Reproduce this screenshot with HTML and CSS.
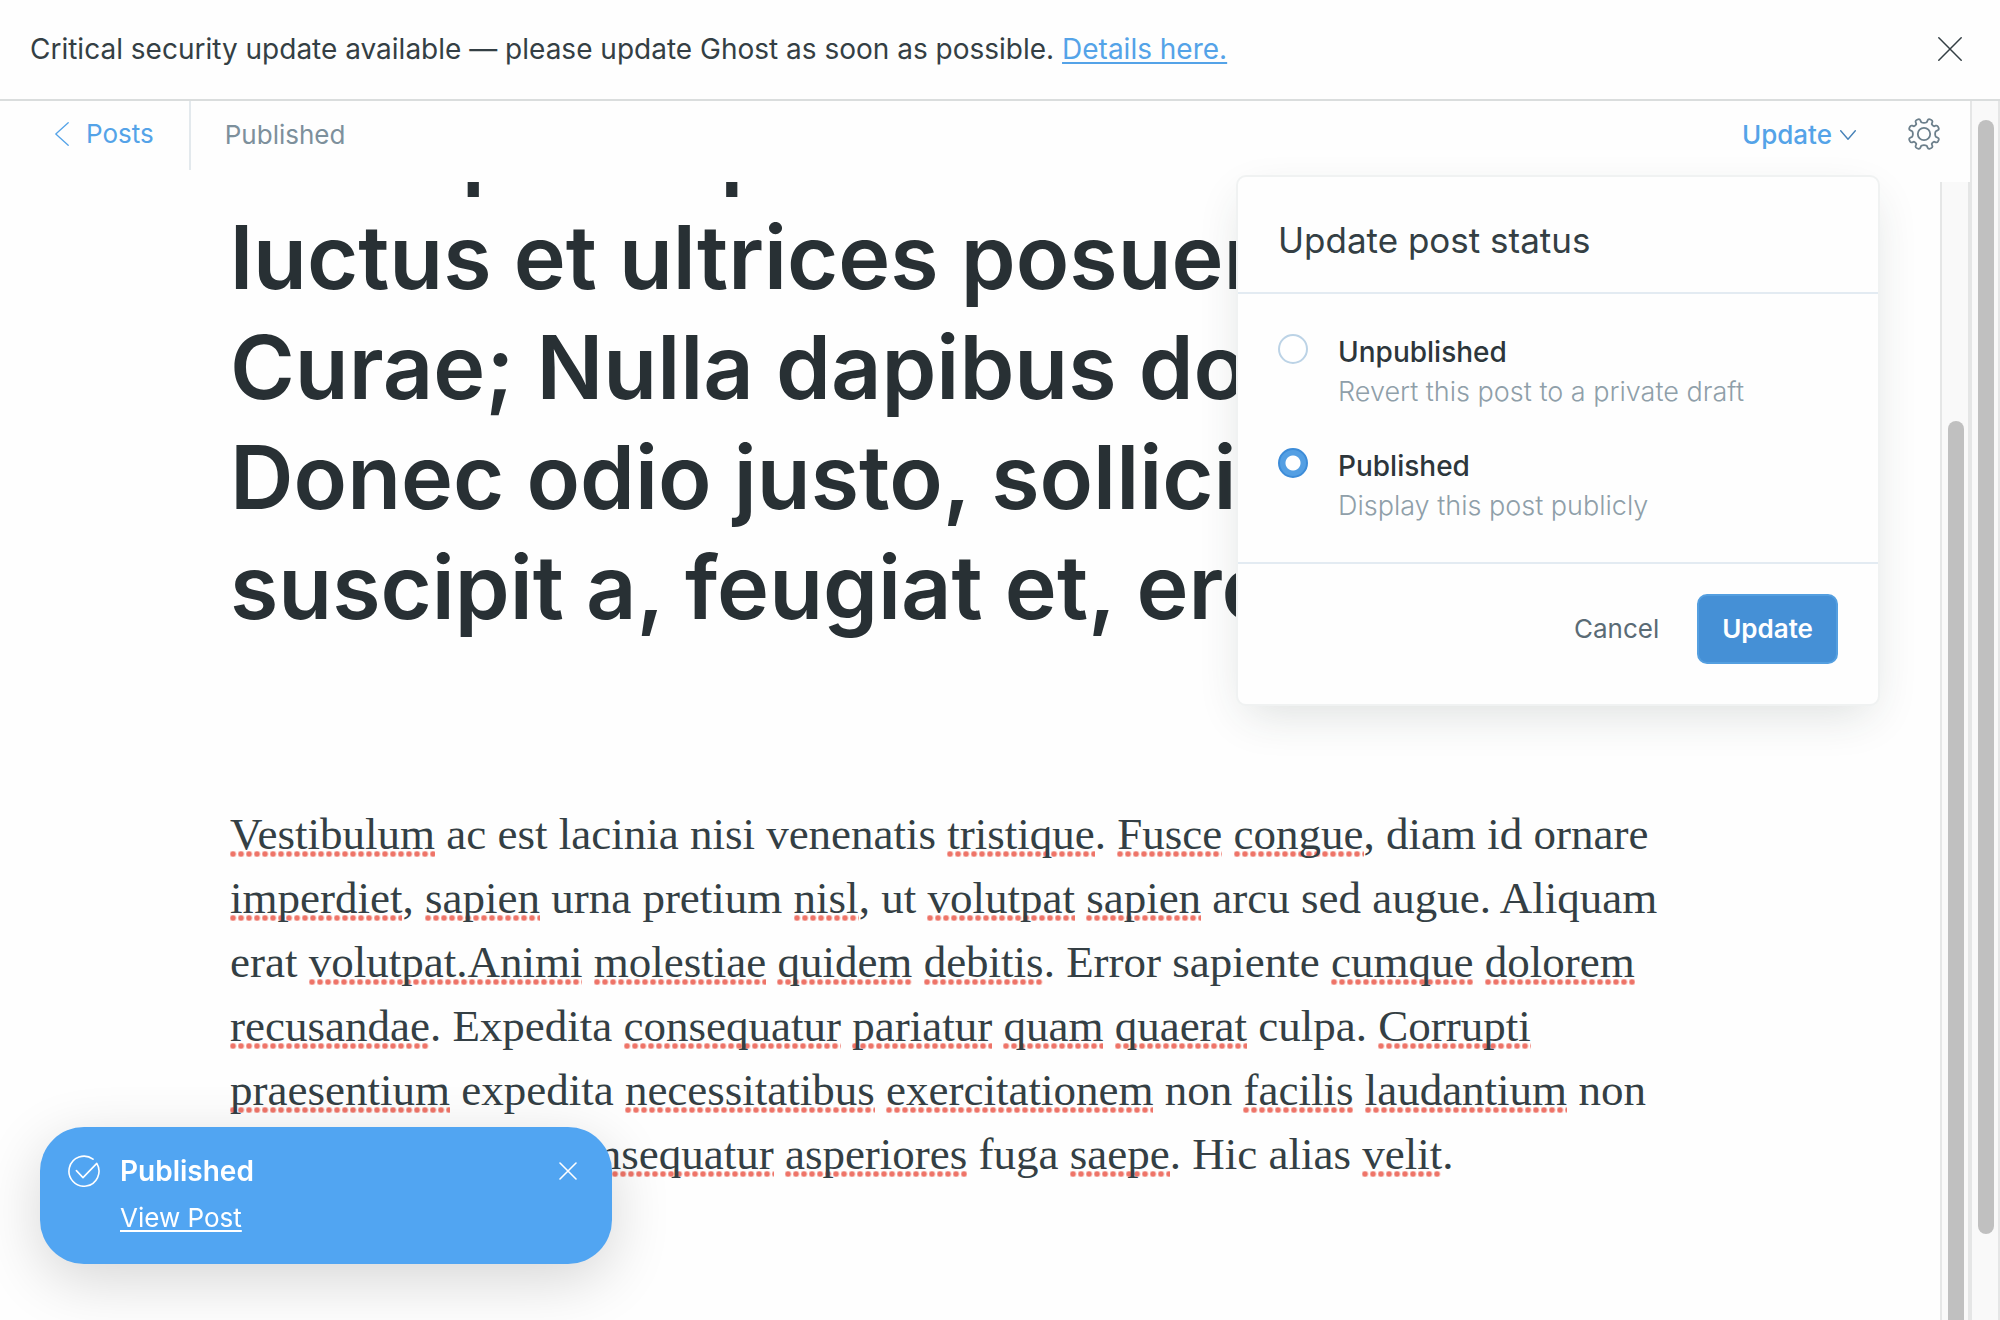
FILE: index.html
```
<!DOCTYPE html>
<html lang="en">
<head>
<meta charset="utf-8">
<title>Post editor</title>
<link rel="stylesheet" href="styles.css">
</head>
<body>
<aside class="banner">
  <p class="banner-text">Critical security update available — please update Ghost as soon as possible. <a class="link" href="#details">Details here.</a></p>
  <button class="icon-button" type="button" aria-label="Dismiss">
    <svg width="24" height="24" viewBox="0 0 24 24" fill="none" stroke="#343f44" stroke-width="1.5" stroke-linecap="round"><path d="M.8.8l22.4 22.4M23.2.8L.8 23.2"/></svg>
  </button>
</aside>
<div class="frame">
  <div class="app">
    <header class="toolbar">
      <nav class="back">
        <a class="back-link" href="#posts">
          <svg width="14" height="24" viewBox="0 0 14 24" fill="none" stroke="#54a3e8" stroke-width="1.3" stroke-linecap="round" stroke-linejoin="round"><path d="M13.2.8L.8 12l12.4 11.2"/></svg>
          Posts
        </a>
      </nav>
      <span class="status">Published</span>
      <button class="update-trigger" type="button" aria-expanded="true">
        Update
        <svg width="16" height="10" viewBox="0 0 16 10" fill="none" stroke="#4782b8" stroke-width="1.4" stroke-linecap="round" stroke-linejoin="round"><path d="M.7.7L8 9.2 15.3.7"/></svg>
      </button>
      <button class="icon-button" type="button" aria-label="Settings">
        <svg width="32" height="32" viewBox="0 0 32 32" fill="none" stroke="#6c7f8b" stroke-width="1.8" stroke-linejoin="round"><circle cx="16" cy="16" r="6.2"/><path d="M13.2 4.2Q16 5.6 18.8 4.2L19.6 2.4Q20.2.8 21.8 1.3L23.4 2Q24.8 2.7 24.3 4.2L23.7 6.1Q24.4 7.6 25.9 8.3L27.8 7.7Q29.3 7.2 30 8.6L30.7 10.2Q31.2 11.8 29.6 12.4L27.8 13.2Q26.4 16 27.8 18.8L29.6 19.6Q31.2 20.2 30.7 21.8L30 23.4Q29.3 24.8 27.8 24.3L25.9 23.7Q24.4 24.4 23.7 25.9L24.3 27.8Q24.8 29.3 23.4 30L21.8 30.7Q20.2 31.2 19.6 29.6L18.8 27.8Q16 26.4 13.2 27.8L12.4 29.6Q11.8 31.2 10.2 30.7L8.6 30Q7.2 29.3 7.7 27.8L8.3 25.9Q7.6 24.4 6.1 23.7L4.2 24.3Q2.7 24.8 2 23.4L1.3 21.8Q.8 20.2 2.4 19.6L4.2 18.8Q5.6 16 4.2 13.2L2.4 12.4Q.8 11.8 1.3 10.2L2 8.6Q2.7 7.2 4.2 7.7L6.1 8.3Q7.6 7.6 8.3 6.1L7.7 4.2Q7.2 2.7 8.6 2L10.2 1.3Q11.8.8 12.4 2.4Z"/></svg>
      </button>
      <form class="popover">
        <h2 class="popover-title">Update post status</h2>
        <div class="options">
          <input class="radio" type="radio" name="status" id="unpublished">
          <label class="option" for="unpublished">Unpublished <small class="hint">Revert this post to a private draft</small></label>
          <input class="radio" type="radio" name="status" id="published" checked>
          <label class="option" for="published">Published <small class="hint">Display this post publicly</small></label>
        </div>
        <footer class="actions">
          <button class="cancel" type="button">Cancel</button>
          <button class="primary" type="button">Update</button>
        </footer>
      </form>
    </header>
    <div class="viewport">
      <main class="editor">
        <h1 class="title">ante ipsum primis in faucibus orci<br>luctus et ultrices posuere cubilia<br>Curae; Nulla dapibus dolor vel est.<br>Donec odio justo, sollicitudin ut,<br>suscipit a, feugiat et, eros.</h1>
        <p class="body"><u>Vestibulum</u> ac est lacinia nisi venenatis <u>tristique</u>. <u>Fusce</u> <u>congue</u>, diam id ornare<br>
        <u>imperdiet</u>, <u>sapien</u> urna pretium <u>nisl</u>, ut <u>volutpat</u> <u>sapien</u> arcu sed augue. Aliquam<br>
        erat <u>volutpat.Animi</u> <u>molestiae</u> <u>quidem</u> <u>debitis</u>. Error sapiente <u>cumque</u> <u>dolorem</u><br>
        <u>recusandae</u>. Expedita <u>consequatur</u> <u>pariatur</u> <u>quam</u> <u>quaerat</u> culpa. <u>Corrupti</u><br>
        <u>praesentium</u> expedita <u>necessitatibus</u> <u>exercitationem</u> non <u>facilis</u> <u>laudantium</u> non<br>
        <u>provident</u> id quos <u>consequatur</u> <u>asperiores</u> fuga <u>saepe</u>. Hic alias <u>velit</u>.</p>
      </main>
      <div class="track track-inner"><div class="thumb"></div></div>
    </div>
  </div>
  <div class="track track-outer"><div class="thumb"></div></div>
</div>
<section class="toast" role="status">
  <svg width="32" height="32" viewBox="0 0 32 32" fill="none" stroke="#fff" stroke-width="1.6" stroke-linecap="round" stroke-linejoin="round"><path d="M25 4.2A15 15 0 1 0 28.8 8.4L15 22.6l-6.6-7"/></svg>
  <div class="toast-copy">
    <strong class="toast-title">Published</strong>
    <a class="toast-link" href="#view">View Post</a>
  </div>
  <button class="icon-button" type="button" aria-label="Close">
    <svg width="18" height="18" viewBox="0 0 18 18" fill="none" stroke="#fff" stroke-width="1.6" stroke-linecap="round"><path d="M1 1l16 16M17 1L1 17"/></svg>
  </button>
</section>
</body>
</html>
```
FILE: styles.css
```
* { box-sizing: border-box; }

body {
  margin: 0;
  height: 100vh;
  display: flex;
  flex-direction: column;
  overflow: hidden;
  background: #fefefe;
  color: #343f44;
  font: 400 26px/32px Inter, "Liberation Sans", sans-serif;
}

h1, h2, p { margin: 0; }

button {
  padding: 0;
  border: 0;
  background: none;
  color: inherit;
  font: inherit;
}

svg { display: block; flex: none; }

.link { color: #54a3e8; text-decoration-thickness: 2px; text-underline-offset: 3px; }

.banner {
  display: flex;
  align-items: center;
  justify-content: space-between;
  padding: 33px 38px 34px 30px;
  border-bottom: 2px solid #dadddd;
  font-size: 28px;
}

.frame { flex: 1; min-height: 0; display: flex; }

.app { flex: 1; min-width: 0; display: flex; flex-direction: column; }

.toolbar {
  position: relative;
  z-index: 1;
  display: flex;
  align-items: flex-start;
  padding-right: 30px;
  padding-bottom: 12px;
}

.back { padding: 17px 35px 20px 55px; border-right: 2px solid #e3e9ed; }

.back-link {
  display: flex;
  align-items: center;
  gap: 17px;
  color: #54a3e8;
  text-decoration: none;
}

.status { flex: 1; padding: 18px 34px; color: #7d909c; }

.update-trigger {
  display: flex;
  align-items: center;
  gap: 8px;
  margin: 18px 52px 0 0;
  color: #54a3e8;
  font-weight: 500;
}

.toolbar > .icon-button { margin-top: 17px; }

.popover {
  position: absolute;
  top: 74px;
  right: 90px;
  width: 644px;
  border: 2px solid #f0f2f2;
  border-radius: 10px;
  background: #fefefe;
  box-shadow: 0 16px 44px -10px rgba(39, 56, 52, .16);
}

.popover-title {
  padding: 44px 40px 32px;
  border-bottom: 2px solid #e3ebf2;
  font-size: 35px;
  font-weight: 400;
  line-height: 39px;
}

.options {
  display: grid;
  grid-template-columns: 30px 1fr;
  column-gap: 30px;
  row-gap: 34px;
  padding: 38px 40px 36px;
}

.radio {
  appearance: none;
  width: 30px;
  height: 30px;
  margin: 2px 0 0;
  border: 2px solid #bcd3e6;
  border-radius: 50%;
  background: #fff;
}

.radio:checked {
  border-color: #3d8cd8;
  background: radial-gradient(circle, #fff 7px, #549fe3 8px);
}

.option { color: #2d363b; font-size: 28px; font-weight: 500; line-height: 40px; }

.hint { display: block; color: #8f9fa9; font-size: 27px; font-weight: 300; }

.actions {
  display: flex;
  justify-content: flex-end;
  gap: 38px;
  padding: 30px 40px 40px;
  border-top: 2px solid #e3ebf2;
}

.cancel { color: #5a6b75; }

.primary {
  height: 70px;
  padding: 0 23px;
  border: 2px solid #549fe0;
  border-radius: 10px;
  background: #4590d6;
  color: #fff;
  font-weight: 600;
}

.viewport { flex: 1; min-height: 0; display: flex; overflow: hidden; }

.editor { flex: 1; min-width: 0; padding: 0 230px; }

.title {
  margin-top: -90px;
  color: #283034;
  font-size: 88px;
  font-weight: 600;
  line-height: 110px;
  white-space: nowrap;
}

.body {
  margin-top: 160px;
  font-family: "Liberation Serif", serif;
  font-size: 45px;
  line-height: 64px;
  white-space: nowrap;
}

/* dotted spell-check mark */
.body u {
  text-decoration: none;
  background: radial-gradient(circle at 3px 3px, #ee7468 2px, rgba(238, 116, 104, .4) 3px, transparent 4px) 0 calc(100% - 2px) / 8px 6px repeat-x;
}

.track {
  flex: none;
  width: 30px;
  padding: 0 4px 0 6px;
  border: solid #e5e6e6;
  border-width: 0 2px;
  background: #f9f9f9;
  overflow: hidden;
}

.thumb { width: 16px; border-radius: 8px; background: #c0c0c0; }

.track-outer { padding-top: 19px; padding-bottom: 86px; }
.track-outer .thumb { height: 100%; }

.track-inner { padding-top: 239px; }
.track-inner .thumb { height: 100%; border-radius: 8px 8px 0 0; }

.toast {
  position: fixed;
  z-index: 2;
  left: 40px;
  bottom: 56px;
  display: flex;
  align-items: flex-start;
  gap: 20px;
  width: 572px;
  padding: 28px 35px 30px 28px;
  border-radius: 44px;
  background: #51a5f2;
  color: #fff;
  box-shadow: 0 16px 60px rgba(0, 0, 0, .16);
}

.toast-copy { flex: 1; display: grid; gap: 15px; }
.toast-title { font-size: 28px; font-weight: 600; }
.toast-link { justify-self: start; color: #fff; text-decoration-thickness: 2px; text-underline-offset: 3px; }
.toast > .icon-button { margin-top: 7px; }
```
